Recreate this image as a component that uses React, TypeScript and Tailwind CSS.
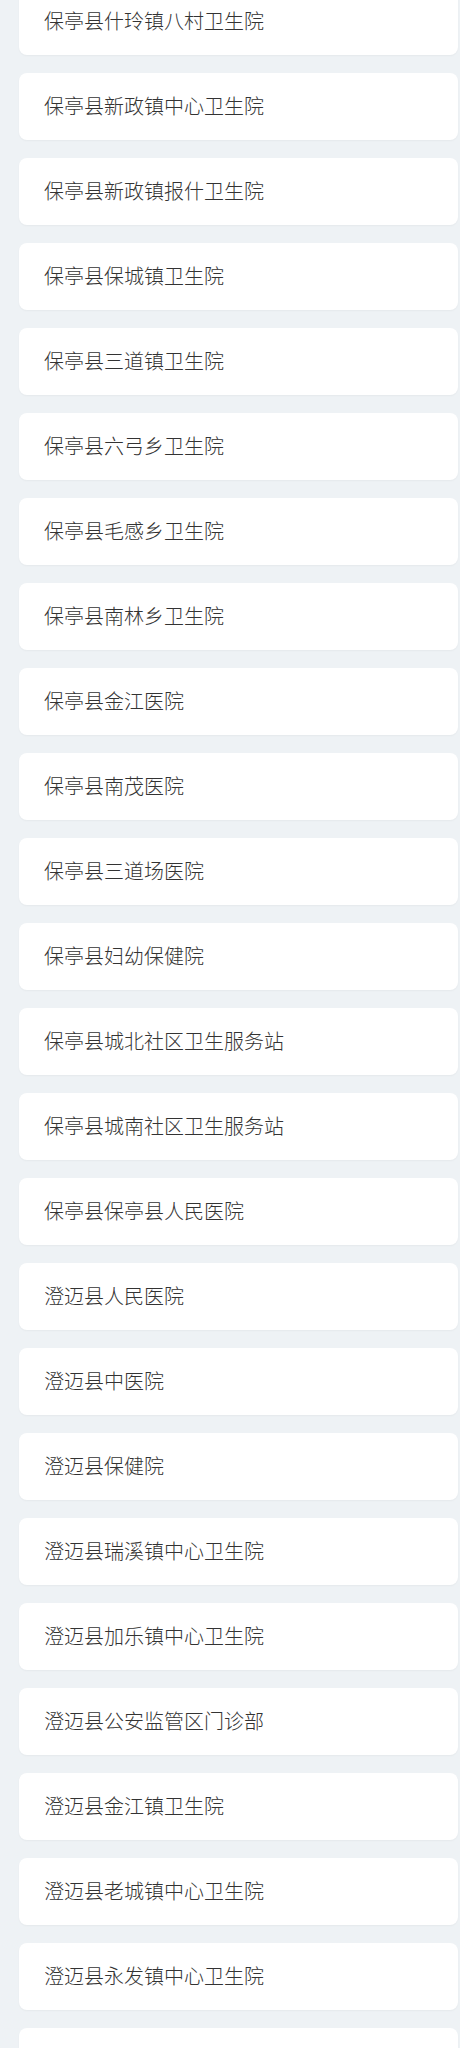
import React from 'react';

// Hospital list (scrolled view)
const hospitals = [
    '保亭县什玲镇八村卫生院',
    '保亭县新政镇中心卫生院',
    '保亭县新政镇报什卫生院',
    '保亭县保城镇卫生院',
    '保亭县三道镇卫生院',
    '保亭县六弓乡卫生院',
    '保亭县毛感乡卫生院',
    '保亭县南林乡卫生院',
    '保亭县金江医院',
    '保亭县南茂医院',
    '保亭县三道场医院',
    '保亭县妇幼保健院',
    '保亭县城北社区卫生服务站',
    '保亭县城南社区卫生服务站',
    '保亭县保亭县人民医院',
    '澄迈县人民医院',
    '澄迈县中医院',
    '澄迈县保健院',
    '澄迈县瑞溪镇中心卫生院',
    '澄迈县加乐镇中心卫生院',
    '澄迈县公安监管区门诊部',
    '澄迈县金江镇卫生院',
    '澄迈县老城镇中心卫生院',
    '澄迈县永发镇中心卫生院',
    '',
];

const App: React.FC = () => {
    return (
        <div
            className="min-h-[2048px] bg-[#eef2f5] overflow-hidden"
            style={{ fontFamily: '"Noto Sans CJK SC", "Noto Sans", sans-serif' }}
        >
            <div className="flex flex-col gap-[18px] -mt-[12.5px] ml-[19px] w-[439px]">
                {hospitals.map((name, i) => (
                    <div
                        key={i}
                        className="h-[67px] flex items-center pl-[25px] bg-white rounded-lg shadow-[0_1px_2px_rgba(0,0,0,0.04)] text-[20px] font-light text-[#333]"
                    >
                        {name}
                    </div>
                ))}
            </div>
        </div>
    );
};

export default App;
